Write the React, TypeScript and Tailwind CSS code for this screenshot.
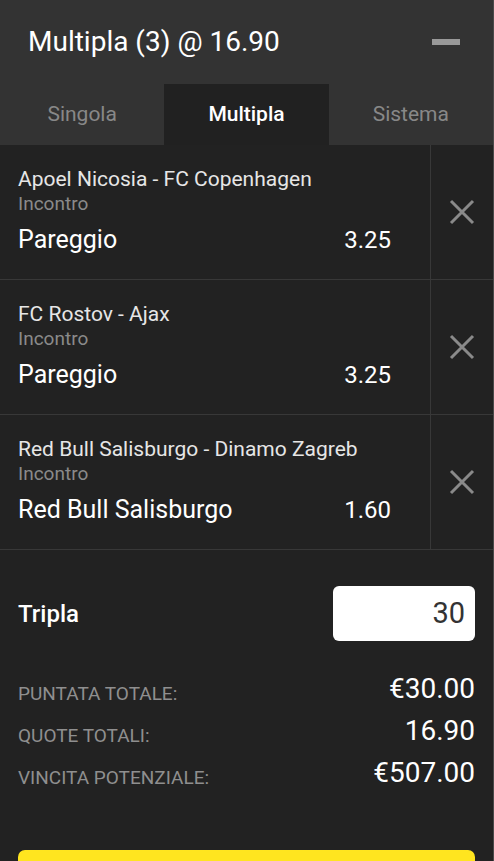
import React from 'react';

type Bet = {
  match: string;
  market: string;
  pick: string;
  odds: string;
};

const bets: Bet[] = [
  { match: 'Apoel Nicosia - FC Copenhagen', market: 'Incontro', pick: 'Pareggio', odds: '3.25' },
  { match: 'FC Rostov - Ajax', market: 'Incontro', pick: 'Pareggio', odds: '3.25' },
  { match: 'Red Bull Salisburgo - Dinamo Zagreb', market: 'Incontro', pick: 'Red Bull Salisburgo', odds: '1.60' },
];

const totals = [
  { label: 'PUNTATA TOTALE:', value: '€30.00' },
  { label: 'QUOTE TOTALI:', value: '16.90' },
  { label: 'VINCITA POTENZIALE:', value: '€507.00' },
];

const tabs = ['Singola', 'Multipla', 'Sistema'];

const CloseIcon = () => (
  <svg width="26" height="26" viewBox="0 0 26 26" fill="none">
    <path d="M2 2L24 24M24 2L2 24" stroke="#8a8a8a" strokeWidth="3" />
  </svg>
);

// Riga di una selezione nella schedina
const BetRow: React.FC<{ bet: Bet }> = ({ bet }) => (
  <div className="flex h-[135px] border-b border-[#383838]">
    <div className="flex-1 pl-[18px] pr-[39px] pt-[22px]">
      <p className="text-[21px] leading-[24px] text-[#e6e6e6]">{bet.match}</p>
      <p className="text-[19px] leading-[26px] text-[#8a8a8a]">{bet.market}</p>
      <div className="mt-[9px] flex items-center justify-between text-[25px] leading-[28px] text-white">
        <span>{bet.pick}</span>
        <span className="text-[24px]">{bet.odds}</span>
      </div>
    </div>
    <button className="flex w-[63px] items-center justify-center border-l border-[#383838]">
      <CloseIcon />
    </button>
  </div>
);

export default function App() {
  return (
    <div
      className="min-h-[861px] w-full border-r border-[#4a4a4a] bg-[#222222]"
      style={{ fontFamily: 'Roboto, "Noto Sans", sans-serif' }}
    >
      {/* Intestazione */}
      <div className="bg-[#333333]">
        <div className="flex h-[84px] items-center justify-between pl-[28px] pr-[33px]">
          <h1 className="text-[28px] text-white">Multipla (3) @ 16.90</h1>
          <span className="block h-[6px] w-[28px] bg-[#999999]" />
        </div>
        <div className="grid h-[61px] grid-cols-3">
          {tabs.map((tab) => (
            <div
              key={tab}
              className={
                tab === 'Multipla'
                  ? 'flex items-center justify-center bg-[#212121] text-[21px] font-medium text-white'
                  : 'flex items-center justify-center text-[21px] text-[#888888]'
              }
            >
              {tab}
            </div>
          ))}
        </div>
      </div>

      {/* Selezioni */}
      <div>
        {bets.map((bet, i) => (
          <BetRow key={i} bet={bet} />
        ))}
      </div>

      {/* Riepilogo */}
      <div className="px-[18px] pt-[36px]">
        <div className="flex items-center justify-between">
          <span className="text-[24px] font-medium text-white">Tripla</span>
          <div className="flex h-[55px] w-[142px] items-center justify-end rounded-[6px] bg-white pr-[10px] text-[29px] text-[#333333]">
            30
          </div>
        </div>
        <div className="mt-[27px]">
          {totals.map((t) => (
            <div key={t.label} className="flex h-[42px] items-baseline justify-between">
              <span className="translate-y-[2px] text-[19px] text-[#8f8f8f]">{t.label}</span>
              <span className="text-[28px] text-white">{t.value}</span>
            </div>
          ))}
        </div>
        <div className="mt-[56px] h-[56px] w-full rounded-[7px] bg-[#ffe51f]" />
      </div>
    </div>
  );
}
